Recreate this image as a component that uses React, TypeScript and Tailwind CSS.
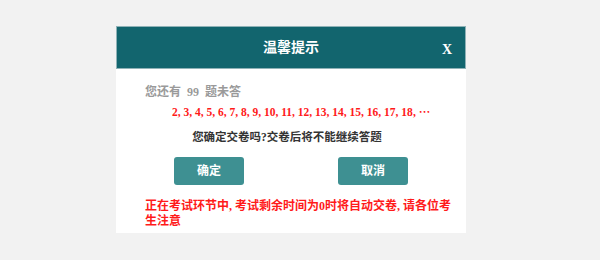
import React from 'react';

const font = { fontFamily: '"Liberation Serif", "Noto Sans CJK SC", serif' };

const ConfirmSubmitDialog: React.FC = () => {
  const unanswered = [2, 3, 4, 5, 6, 7, 8, 9, 10, 11, 12, 13, 14, 15, 16, 17, 18];

  return (
    <div className="w-[350px] bg-white">
      {/* Header */}
      <div className="relative flex h-[43px] items-center justify-center border border-[#8fb2b7] bg-[#12656e]">
        <span className="text-[14px] font-bold text-white">温馨提示</span>
        <span className="absolute right-[13px] top-[12px] text-[14px] font-bold text-white">X</span>
      </div>

      {/* Body */}
      <div className="px-[29px] pt-[15px] pb-[4px]">
        <p className="text-[12px] leading-[16px] font-bold text-[#9a9a9a]">
          您还有 <span className="mx-[3px]">99</span> 题未答
        </p>
        <p className="mt-[4px] pl-[27px] text-[11.5px] leading-[16px] font-bold text-[#ff1a1a] whitespace-nowrap">
          {unanswered.join(', ')}, ⋯
        </p>
        <p className="mt-[9px] pr-[8px] text-center text-[11.5px] leading-[16px] font-bold text-[#333]">
          您确定交卷吗?交卷后将不能继续答题
        </p>

        <div className="mt-[12px] flex justify-between px-[29px]">
          <button className="h-[28px] w-[70px] rounded-[3px] bg-[#3e9092] text-[12px] font-bold text-white">
            确定
          </button>
          <button className="h-[28px] w-[70px] rounded-[3px] bg-[#3e9092] text-[12px] font-bold text-white">
            取消
          </button>
        </div>

        <p className="mt-[14px] -mr-[14px] text-[12px] leading-[15px] font-bold text-[#ff1a1a]">
          正在考试环节中, 考试剩余时间为0时将自动交卷, 请各位考生注意
        </p>
      </div>
    </div>
  );
};

export default function App() {
  return (
    <div className="flex h-[260px] w-[600px] items-start bg-[#f2f2f2] pl-[116px] pt-[26px]" style={font}>
      <ConfirmSubmitDialog />
    </div>
  );
}
